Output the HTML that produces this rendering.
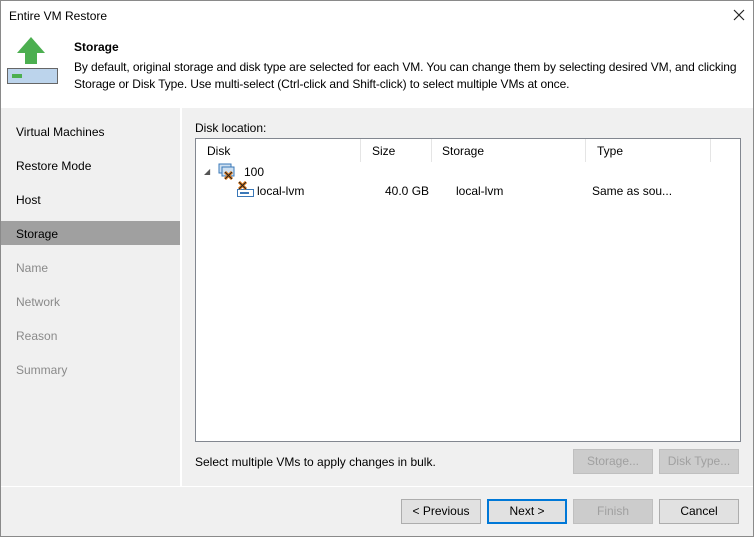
<!DOCTYPE html>
<html><head><style>
*{margin:0;padding:0;box-sizing:border-box}
body{width:754px;height:537px;overflow:hidden;font-family:"Liberation Sans",sans-serif;font-size:12px;color:#000;background:#f0f0f0;position:relative}
.abs{position:absolute}
.win{left:0;top:0;width:754px;height:537px;border:1px solid #8a8a8a}
.btn{position:absolute;height:25px;border:1px solid #adadad;background:#e1e1e1;text-align:center;line-height:23px;font-size:12px}
.dis{color:#a0a0a0;background:#cccccc;border-color:#bfbfbf}
.nav{position:absolute;left:16px;font-size:12px}
</style></head><body>
<div class="abs" style="left:0;top:0;width:754px;height:108px;background:#fff"></div>
<div class="abs" style="left:9px;top:9px;font-size:12px">Entire VM Restore</div>
<svg class="abs" style="left:733px;top:9px" width="12" height="12"><path d="M1 1L11 11M11 1L1 11" stroke="#222" stroke-width="1.2"/></svg>
<svg class="abs" style="left:6px;top:36px" width="54" height="50">
<polygon points="25,1 39,17 31,17 31,28 19,28 19,17 11,17" fill="#4caf50"/>
<rect x="1.5" y="32.5" width="50" height="15" fill="#bcd4ec" stroke="#666"/>
<rect x="6" y="38" width="10" height="4" fill="#4caf50"/>
</svg>
<div class="abs" style="left:74px;top:40px;font-weight:bold">Storage</div>
<div class="abs" style="left:74px;top:59px;line-height:17px;width:680px;letter-spacing:-0.1px">By default, original storage and disk type are selected for each VM. You can change them by selecting desired VM, and clicking Storage or Disk Type. Use multi-select (Ctrl-click and Shift-click) to select multiple VMs at once.</div>
<div class="abs" style="left:180px;top:108px;width:2px;height:379px;background:#fff"></div>
<div class="abs" style="left:1px;top:221px;width:179px;height:24px;background:#a0a0a0"></div>
<div class="nav" style="top:125px">Virtual Machines</div>
<div class="nav" style="top:159px">Restore Mode</div>
<div class="nav" style="top:193px">Host</div>
<div class="nav" style="top:227px">Storage</div>
<div class="nav" style="top:261px;color:#8a8a8a">Name</div>
<div class="nav" style="top:295px;color:#8a8a8a">Network</div>
<div class="nav" style="top:329px;color:#8a8a8a">Reason</div>
<div class="nav" style="top:363px;color:#8a8a8a">Summary</div>
<div class="abs" style="left:195px;top:121px">Disk location:</div>
<div class="abs" style="left:195px;top:138px;width:546px;height:304px;background:#fff;border:1px solid #828790"></div>
<div class="abs" style="left:360px;top:139px;width:1px;height:23px;background:#e5e5e5"></div>
<div class="abs" style="left:431px;top:139px;width:1px;height:23px;background:#e5e5e5"></div>
<div class="abs" style="left:585px;top:139px;width:1px;height:23px;background:#e5e5e5"></div>
<div class="abs" style="left:710px;top:139px;width:1px;height:23px;background:#e5e5e5"></div>
<div class="abs" style="left:207px;top:144px">Disk</div>
<div class="abs" style="left:372px;top:144px">Size</div>
<div class="abs" style="left:442px;top:144px">Storage</div>
<div class="abs" style="left:597px;top:144px">Type</div>
<div class="abs" style="left:204px;top:167px;font-size:8px;color:#555">◢</div>
<svg class="abs" style="left:218px;top:163px" width="18" height="18">
<rect x="1" y="1" width="12" height="9" fill="#cfe0f0" stroke="#3a78b8"/>
<rect x="4" y="4" width="12" height="9" fill="#cfe0f0" stroke="#3a78b8"/>
<path d="M7 9l7 7M14 9l-7 7" stroke="#e07b1c" stroke-width="3"/><path d="M7 9l7 7M14 9l-7 7" stroke="#222" stroke-width="1"/>
</svg>
<div class="abs" style="left:244px;top:165px">100</div>
<svg class="abs" style="left:236px;top:181px" width="20" height="18">
<rect x="1.5" y="8.5" width="16" height="7" fill="#fff" stroke="#3a78b8"/><rect x="4" y="11" width="9" height="2" fill="#3a78b8"/>
<path d="M3 1l7 7M10 1l-7 7" stroke="#e07b1c" stroke-width="3"/><path d="M3 1l7 7M10 1l-7 7" stroke="#222" stroke-width="1"/>
</svg>
<div class="abs" style="left:257px;top:184px">local-lvm</div>
<div class="abs" style="left:385px;top:184px">40.0 GB</div>
<div class="abs" style="left:456px;top:184px">local-lvm</div>
<div class="abs" style="left:592px;top:184px">Same as sou...</div>
<div class="abs" style="left:195px;top:455px">Select multiple VMs to apply changes in bulk.</div>
<div class="btn dis" style="left:573px;top:449px;width:80px">Storage...</div>
<div class="btn dis" style="left:659px;top:449px;width:80px">Disk Type...</div>
<div class="abs" style="left:1px;top:486px;width:752px;height:1px;background:#fff"></div>
<div class="btn" style="left:401px;top:499px;width:80px">&lt; Previous</div>
<div class="btn" style="left:487px;top:499px;width:80px;border:2px solid #0078d7;line-height:21px">Next &gt;</div>
<div class="btn dis" style="left:573px;top:499px;width:80px">Finish</div>
<div class="btn" style="left:659px;top:499px;width:80px">Cancel</div>
<div class="abs win"></div>
</body></html>
